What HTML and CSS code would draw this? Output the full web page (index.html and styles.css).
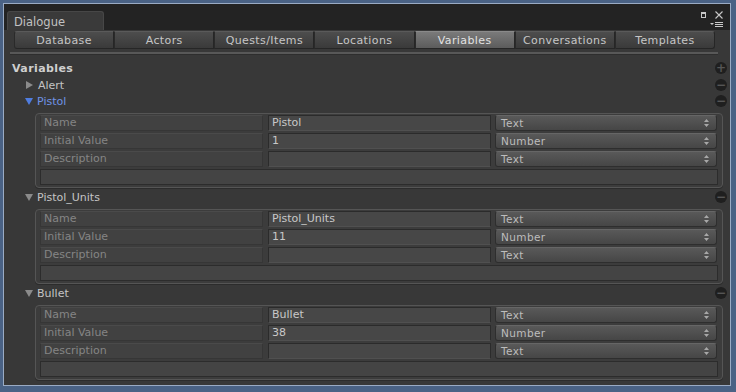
FILE: index.html
```html
<!DOCTYPE html>
<html lang="en">
<head>
    <meta charset="UTF-8">
    <title>Dialogue</title>
    <link rel="stylesheet" href="styles.css">
</head>
<body>
    <div class="window">
        <div class="titlebar">
            <div class="doc-tab">Dialogue</div>
            <div class="win-controls">
                <div class="win-row">
                    <span class="max-box"></span>
                    <svg class="close-x" width="8" height="8" viewBox="0 0 8 8"><path d="M0.5 0.5 L7.5 7.5 M7.5 0.5 L0.5 7.5" stroke="#c8c8c8" stroke-width="1.1"/></svg>
                </div>
                <svg class="menu-icon" width="13" height="6" viewBox="0 0 13 6"><path d="M0 1 L4 1 L2 3 Z" fill="#c8c8c8"/><path d="M5 0.5 H13 M5 2.5 H13 M5 4.5 H13" stroke="#c8c8c8" stroke-width="1"/></svg>
            </div>
        </div>

        <div class="content">
            <div class="tabs">
                <div class="tab">Database</div>
                <div class="tab">Actors</div>
                <div class="tab">Quests/Items</div>
                <div class="tab">Locations</div>
                <div class="tab active">Variables</div>
                <div class="tab">Conversations</div>
                <div class="tab">Templates</div>
            </div>
            <div class="rule"></div>

            <div class="heading-row">
                <span class="heading">Variables</span>
                <span class="round-btn">+</span>
            </div>

            <div class="fold-row">
                <span class="tri right"></span><span class="fold-label">Alert</span>
                <span class="round-btn">&minus;</span>
            </div>

            <div class="fold-row selected">
                <span class="tri down"></span><span class="fold-label">Pistol</span>
                <span class="round-btn">&minus;</span>
            </div>
            <div class="var-box">
                <div class="cell label">Name</div><div class="cell field">Pistol</div><div class="popup">Text<svg class="arrows" width="5" height="8" viewBox="0 0 5 8"><path d="M2.5 0 L5 3 L0 3 Z M0 5 L5 5 L2.5 8 Z" fill="#a8a8a8"/></svg></div>
                <div class="cell label">Initial Value</div><div class="cell field">1</div><div class="popup">Number<svg class="arrows" width="5" height="8" viewBox="0 0 5 8"><path d="M2.5 0 L5 3 L0 3 Z M0 5 L5 5 L2.5 8 Z" fill="#a8a8a8"/></svg></div>
                <div class="cell label">Description</div><div class="cell field"></div><div class="popup">Text<svg class="arrows" width="5" height="8" viewBox="0 0 5 8"><path d="M2.5 0 L5 3 L0 3 Z M0 5 L5 5 L2.5 8 Z" fill="#a8a8a8"/></svg></div>
                <div class="cell field wide"></div>
            </div>

            <div class="fold-row">
                <span class="tri down"></span><span class="fold-label">Pistol_Units</span>
                <span class="round-btn">&minus;</span>
            </div>
            <div class="var-box">
                <div class="cell label">Name</div><div class="cell field">Pistol_Units</div><div class="popup">Text<svg class="arrows" width="5" height="8" viewBox="0 0 5 8"><path d="M2.5 0 L5 3 L0 3 Z M0 5 L5 5 L2.5 8 Z" fill="#a8a8a8"/></svg></div>
                <div class="cell label">Initial Value</div><div class="cell field">11</div><div class="popup">Number<svg class="arrows" width="5" height="8" viewBox="0 0 5 8"><path d="M2.5 0 L5 3 L0 3 Z M0 5 L5 5 L2.5 8 Z" fill="#a8a8a8"/></svg></div>
                <div class="cell label">Description</div><div class="cell field"></div><div class="popup">Text<svg class="arrows" width="5" height="8" viewBox="0 0 5 8"><path d="M2.5 0 L5 3 L0 3 Z M0 5 L5 5 L2.5 8 Z" fill="#a8a8a8"/></svg></div>
                <div class="cell field wide"></div>
            </div>

            <div class="fold-row">
                <span class="tri down"></span><span class="fold-label">Bullet</span>
                <span class="round-btn">&minus;</span>
            </div>
            <div class="var-box">
                <div class="cell label">Name</div><div class="cell field">Bullet</div><div class="popup">Text<svg class="arrows" width="5" height="8" viewBox="0 0 5 8"><path d="M2.5 0 L5 3 L0 3 Z M0 5 L5 5 L2.5 8 Z" fill="#a8a8a8"/></svg></div>
                <div class="cell label">Initial Value</div><div class="cell field">38</div><div class="popup">Number<svg class="arrows" width="5" height="8" viewBox="0 0 5 8"><path d="M2.5 0 L5 3 L0 3 Z M0 5 L5 5 L2.5 8 Z" fill="#a8a8a8"/></svg></div>
                <div class="cell label">Description</div><div class="cell field"></div><div class="popup">Text<svg class="arrows" width="5" height="8" viewBox="0 0 5 8"><path d="M2.5 0 L5 3 L0 3 Z M0 5 L5 5 L2.5 8 Z" fill="#a8a8a8"/></svg></div>
                <div class="cell field wide"></div>
            </div>
        </div>
    </div>
</body>
</html>
```

FILE: styles.css
```css
html, body { margin: 0; height: 100%; }
body { background: #4a6285; font-family: "DejaVu Sans", sans-serif; font-size: 11px; color: #c4c4c4; overflow: hidden; }

.window { margin: 4px 6px 0 4px; height: 381px; background: #383838; box-shadow: 0 0 0 1px #9aabc4; display: flex; flex-direction: column; }

/* title bar with the docked tab */
.titlebar { height: 26px; background: #232323; display: flex; align-items: flex-start; }
.doc-tab { margin: 7px 0 0 3px; width: 97px; height: 19px; box-sizing: border-box; padding: 3px 0 0 6px; background: #3a3a3a; border: 1px solid #474747; border-bottom: none; border-radius: 3px 3px 0 0; color: #c2c2c2; font-size: 11.5px; }
.win-controls { margin-left: auto; margin-right: 7px; margin-top: 7px; display: flex; flex-direction: column; align-items: flex-end; gap: 3px; }
.win-row { display: flex; align-items: center; gap: 9px; }
.max-box { width: 3px; height: 3px; border: 1px solid #c8c8c8; border-top-width: 2px; }

.content { flex: 1; display: flex; flex-direction: column; }

/* toolbar tabs */
.tabs { display: flex; margin: 1px 0 0 10px; width: 701px; height: 18px; }
.tab { flex: 1; text-align: center; line-height: 17px; color: #c6c6c6; background: linear-gradient(#4d4d4d, #3a3a3a); border: 1px solid #262626; border-left-color: #2a2a2a; border-top-color: #5a5a5a; box-sizing: border-box; letter-spacing: 0.4px; }
.tab:first-child { border-radius: 3px 0 0 3px; }
.tab:last-child { border-radius: 0 3px 3px 0; }
.tab.active { background: linear-gradient(#7a7a7a, #5c5c5c); color: #e2e2e2; border-top-color: #8a8a8a; }
.rule { margin: 3px 0 0 6px; width: 708px; height: 2px; background: #585858; border-bottom: 1px solid #2e2e2e; }

/* foldout rows */
.heading-row, .fold-row { display: flex; align-items: center; height: 16px; padding-right: 3px; }
.heading-row { margin: 5px 0 1px; padding-left: 8px; }
.heading { font-weight: bold; color: #cfcfcf; letter-spacing: 0.4px; }
.fold-row { padding-left: 21px; }
.var-box + .fold-row { margin-top: 1px; }
.fold-label { margin-left: 4px; color: #c4c4c4; }
.fold-row.selected .fold-label { color: #6f93e6; }
.tri { width: 0; height: 0; }
.tri.right { border-top: 4.5px solid transparent; border-bottom: 4.5px solid transparent; border-left: 7px solid #8b8b8b; margin-left: 1px; margin-right: 1px; }
.tri.down { border-left: 4.5px solid transparent; border-right: 4.5px solid transparent; border-top: 7px solid #8b8b8b; }
.fold-row.selected .tri.down { border-top-color: #4f7de0; }

.round-btn { margin-left: auto; width: 12px; height: 12px; border-radius: 50%; background: #1f1f1f; color: #555; font-weight: bold; font-size: 12px; line-height: 12px; text-align: center; }

/* variable box */
.var-box { margin: 4px 7px 0 31px; padding: 1px 4px 2px 4px; display: grid; grid-template-columns: 223px 224px 1fr; column-gap: 4px; row-gap: 2px; background: #3c3c3c; border: 1px solid #555; border-radius: 4px; box-shadow: 0 1px 0 #2c2c2c; }
.cell { height: 16px; box-sizing: border-box; line-height: 14px; padding-left: 3px; white-space: nowrap; }
.label { background: #414141; border: 1px solid #363636; border-top-color: #4a4a4a; color: #858585; }
.field { background: #474747; border: 1px solid #2b2b2b; border-bottom-color: #505050; color: #c8c8c8; margin-left: 1px; }
.field.wide { grid-column: 1 / -1; margin-left: 0; border-color: #2c2c2c; background: #444; }
.popup { height: 16px; box-sizing: border-box; margin-right: 1px; padding: 0 7px 0 5px; line-height: 14px; display: flex; align-items: center; justify-content: space-between; background: linear-gradient(#595959, #464646); border: 1px solid #2e2e2e; border-top-color: #666; border-radius: 3px; color: #bdbdbd; font-size: 10.5px; letter-spacing: 0.4px; }
```
